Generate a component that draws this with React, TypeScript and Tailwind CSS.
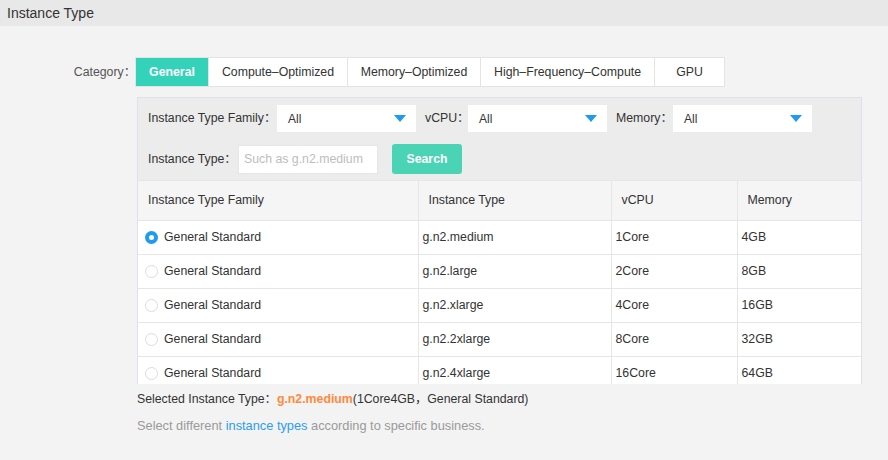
import { useState } from "react";

const tabs = [
  { label: "General", w: "w-[72px]" },
  { label: "Compute–Optimized", w: "w-[139px]" },
  { label: "Memory–Optimized", w: "w-[133px]" },
  { label: "High–Frequency–Compute", w: "w-[174px]" },
  { label: "GPU", w: "w-[70px]" },
];

const rows = [
  { type: "g.n2.medium", cpu: "1Core", mem: "4GB" },
  { type: "g.n2.large", cpu: "2Core", mem: "8GB" },
  { type: "g.n2.xlarge", cpu: "4Core", mem: "16GB" },
  { type: "g.n2.2xlarge", cpu: "8Core", mem: "32GB" },
  { type: "g.n2.4xlarge", cpu: "16Core", mem: "64GB" },
];

function Select() {
  return (
    <div className="flex h-[27px] w-[139px] items-center justify-between bg-white pl-[11px] pr-[10px] text-[12px] text-[#333]">
      <span>All</span>
      <svg width="12" height="7" viewBox="0 0 12 7">
        <path d="M0 0 L12 0 L6 7 Z" fill="#1e9bef" />
      </svg>
    </div>
  );
}

function Radio({ checked }: { checked: boolean }) {
  return checked ? (
    <span className="flex h-[13px] w-[13px] items-center justify-center rounded-full bg-[#1e9bef]">
      <span className="h-[5px] w-[5px] rounded-full bg-white" />
    </span>
  ) : (
    <span className="h-[13px] w-[13px] rounded-full border border-[#d8dde3] bg-white" />
  );
}

export default function App() {
  const [active, setActive] = useState(0);
  const [selected, setSelected] = useState(0);

  return (
    <div
      className="h-[460px] w-[888px] overflow-hidden bg-[#f3f3f3] text-[12.3px] text-[#333]"
      style={{ fontFamily: '"Liberation Sans", Arial, "Noto Sans CJK SC", sans-serif' }}
    >
      {/* header */}
      <div className="flex h-[26px] items-center bg-[#e8e8e8] pl-[7px] text-[14px] text-[#333]">
        Instance Type
      </div>

      {/* category tabs */}
      <div className="mt-[31px] flex items-center">
        <div className="w-[136px] text-right text-[#555]">Category：</div>
        <div className="-ml-px flex h-[30px] border border-[#e4e4e4] bg-white">
          {tabs.map((t, i) => (
            <button
              key={t.label}
              onClick={() => setActive(i)}
              className={`${t.w} flex items-center justify-center ${
                i === 0 ? "" : "border-l border-[#e4e4e4]"
              } ${i === active ? "bg-[#34d2b9] font-bold text-white" : "text-[#333]"}`}
            >
              {t.label}
            </button>
          ))}
        </div>
      </div>

      <div className="mt-[10px] pl-[137px]">
        {/* panel */}
        <div className="w-[725px] border border-b-0 border-[#dde2e8]">
          <div className="bg-[#ececec] px-[10px] pt-[7px] pb-[6px]">
            <div className="flex items-center">
              <span className="w-[129px]">Instance Type Family：</span>
              <Select />
              <span className="ml-[9px] w-[43px]">vCPU：</span>
              <Select />
              <span className="ml-[9px] w-[57px]">Memory：</span>
              <Select />
            </div>
            <div className="mt-[12px] flex items-center">
              <span className="w-[90px]">Instance Type：</span>
              <input
                placeholder="Such as g.n2.medium"
                className="h-[29px] w-[140px] border border-[#e6e6e6] bg-white pl-[5px] text-[12.3px] outline-none placeholder:text-[#bdbdbd]"
              />
              <button className="ml-[14px] h-[30px] w-[70px] rounded-[3px] bg-[#4bd3b6] font-bold text-white">
                Search
              </button>
            </div>
          </div>

          <div className="h-[204px] overflow-hidden">
            <table className="w-full table-fixed border-collapse">
              <colgroup>
                <col className="w-[280px]" />
                <col className="w-[193px]" />
                <col className="w-[126px]" />
                <col />
              </colgroup>
              <thead>
                <tr className="h-[40px] border-y border-[#e6e6e6] bg-[#f5f5f5] text-left">
                  <th className="pl-[10px] font-normal">Instance Type Family</th>
                  <th className="border-l border-[#e6e6e6] pl-[10px] font-normal">Instance Type</th>
                  <th className="border-l border-[#e6e6e6] pl-[10px] font-normal">vCPU</th>
                  <th className="border-l border-[#e6e6e6] pl-[10px] font-normal">Memory</th>
                </tr>
              </thead>
              <tbody className="bg-white">
                {rows.map((r, i) => (
                  <tr
                    key={r.type}
                    onClick={() => setSelected(i)}
                    className="h-[34px] border-b border-[#e6e6e6]"
                  >
                    <td className="pl-[7px]">
                      <div className="flex items-center gap-[6px]">
                        <Radio checked={i === selected} />
                        <span>General Standard</span>
                      </div>
                    </td>
                    <td className="border-l border-[#e6e6e6] pl-[4px]">{r.type}</td>
                    <td className="border-l border-[#e6e6e6] pl-[4px]">{r.cpu}</td>
                    <td className="border-l border-[#e6e6e6] pl-[4px]">{r.mem}</td>
                  </tr>
                ))}
              </tbody>
            </table>
          </div>
        </div>

        <div className="mt-[6px] text-[#333]">
          Selected Instance Type：
          <span className="font-bold text-[#ff8a3d]">{rows[selected].type}</span>
          ({rows[selected].cpu}
          {rows[selected].mem}，General Standard)
        </div>
        <div className="mt-[8px] text-[12.8px] text-[#9a9a9a]">
          Select different <span className="text-[#2a9df4]">instance types</span> according to
          specific business.
        </div>
      </div>
    </div>
  );
}
